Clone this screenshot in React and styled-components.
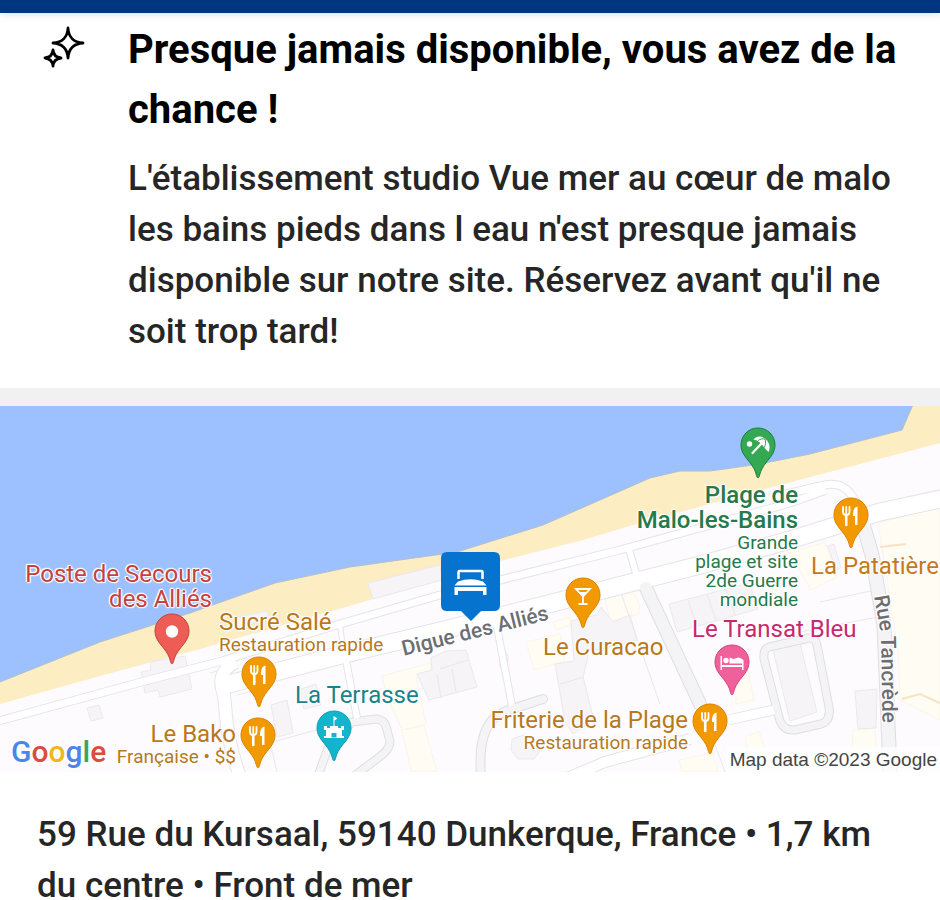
import React from "react";
import styled, { createGlobalStyle, css } from "styled-components";

const GlobalStyle = createGlobalStyle`
  *, *::before, *::after { box-sizing: border-box; }
  body {
    margin: 0;
    background: #fff;
    color: #262626;
    font-family: Roboto, "Liberation Sans", sans-serif;
  }
`;

const Page = styled.main`
  display: flex;
  flex-direction: column;
`;

const TopBar = styled.header`
  height: 13px;
  background: #00357f;
  box-shadow: 0 1px 8px rgba(0, 0, 0, 0.14);
`;

const Notice = styled.section`
  display: grid;
  grid-template-columns: 44px minmax(0, 1fr);
  column-gap: 42px;
  padding: 7px 36px 31px 42px;
`;

const NoticeIcon = styled.svg`
  width: 44px;
  height: 44px;
  margin-top: 6px;
`;

const NoticeTitle = styled.h2`
  margin: 0 0 13px;
  color: #000;
  font-size: 40px;
  font-weight: 700;
  line-height: 60px;
`;

const BodyText = styled.p`
  margin: 0;
  font-size: 35px;
  font-weight: 500;
  line-height: 51px;
`;

const Divider = styled.div`
  height: 18px;
  background: #f1f1f1;
`;

const Map = styled.section`
  position: relative;
  height: 366px;
  overflow: hidden;
  background: #fdfbfe;
`;

const MapDrawing = styled.svg`
  display: block;
  width: 100%;
  height: 100%;
`;

const spot = css`
  position: absolute;
  left: ${({ $x }) => `calc(100% * ${$x} / 940)`};
  top: ${({ $y }) => $y}px;
`;

const PinShape = styled.svg`
  ${spot}
  width: 36px;
  height: 52px;
  margin-left: -18px;
  color: ${({ $color }) => $color};
`;

const StayMarker = styled.svg`
  ${spot}
  width: 60px;
  height: 70px;
  margin-left: -30px;
`;

const halo = "0 0 2px #fff, 1px 0 1px #fff, -1px 0 1px #fff, 0 1px 1px #fff, 0 -1px 1px #fff, 1px 1px 1px #fff, -1px -1px 1px #fff";

const PlaceLabel = styled.div`
  position: absolute;
  top: ${({ $y }) => $y}px;
  ${({ $x, $end }) =>
    $end
      ? `right: calc(100% * ${940 - $x} / 940); text-align: right;`
      : `left: calc(100% * ${$x} / 940);`}
  color: ${({ $color }) => $color};
  white-space: nowrap;
  text-shadow: ${halo};
`;

const PlaceName = styled.div`
  font-size: 24px;
  font-weight: ${({ $strong }) => ($strong ? 500 : 400)};
  line-height: 25px;
`;

const PlaceKind = styled.div`
  font-size: 19px;
  line-height: 19px;
`;

const StreetName = styled.span`
  ${spot}
  color: #6d6e73;
  font-size: 21px;
  font-weight: 500;
  line-height: 24px;
  white-space: nowrap;
  text-shadow: ${halo};
  transform: rotate(${({ $angle }) => $angle}deg);
  transform-origin: 0 50%;
`;

const Logo = styled.div`
  position: absolute;
  left: 11px;
  bottom: 0;
  font-size: 30px;
  font-weight: 500;
  line-height: 40px;
  text-shadow: ${halo};
`;

const LogoLetter = styled.span`
  color: ${({ $color }) => $color};
`;

const Credit = styled.small`
  position: absolute;
  right: 0;
  bottom: 0;
  padding: 0 3px;
  background: rgba(255, 255, 255, 0.7);
  color: #444;
  font-family: "Liberation Sans", Arial, sans-serif;
  font-size: 19px;
  line-height: 25px;
`;

const Address = styled.address`
  padding: 37px 37px 0;
  font-style: normal;
`;

const glyphs = {
  food: (
    <g fill="none" stroke="#fff" strokeWidth="1.8" strokeLinecap="round">
      <path d="M10 10v5c0 4 6.500 4 6.500 0v-5M13.250 10v6" />
      <path d="M13.250 18v10" strokeWidth="2.600" />
      <path d="M24.500 9.500c-4 1-4.500 5-4.500 9.500h2v9h2.500z" fill="#fff" stroke="none" />
    </g>
  ),
  dot: <circle cx="18" cy="18.500" r="6.200" fill="#fff" />,
  drink: (
    <g fill="none" stroke="#fff" strokeWidth="1.800">
      <path d="M11 12h14l-7 7.500z" />
      <path d="M14 15h8l-4 4z" fill="#fff" stroke="none" />
      <path d="M18 18v9M13.500 27h9" />
    </g>
  ),
  bed: (
    <g fill="#fff">
      <path d="M6.500 12H8v9h20v-5h1.500v10H28v-3H8v3H6.500z" />
      <circle cx="12" cy="16.500" r="2.700" />
      <path d="M15.500 19.500v-6l4 1.500 5-1.500 4 1.500v4.500z" />
    </g>
  ),
  castle: (
    <g fill="#fff">
      <path d="M8 16h3v2h3v-2h8v2h3v-2h3v4h-2v6h2v2H8v-2h2v-6H8z" />
      <path d="M17.500 16V6l4 2.500-3 2V16z" />
      <path d="M15.500 27.500V23h5v4.500z" fill="#12b5cb" />
    </g>
  ),
  beach: (
    <g fill="#fff">
      <circle cx="9.500" cy="17" r="2.700" />
      <path d="M13.500 12.500C16 9 21 8.500 25 11.500 29 14.500 31 20 28.500 25L26 22.500 21 16.500 17 13.500z" />
      <path d="M21.500 16.500L12.500 26" stroke="#fff" strokeWidth="2.200" strokeLinecap="round" />
      <path d="M18 13.500C20 12 23 11.500 25 12M24.500 20.500C25.500 18 26 14.500 25 12" fill="none" stroke="#34a853" strokeWidth="1" />
    </g>
  ),
};

function Pin({ x, y, color, edge, glyph }) {
  return (
    <PinShape $x={x} $y={y} $color={color} viewBox="0 0 36 52" aria-hidden="true">
      <path
        d="M18 1C8.500 1 1 8.500 1 18c0 7 4 11.500 8.500 17 3.500 4.500 6 8.500 7 13.500.5 3 2.500 3 3 0 1-5 3.500-9 7-13.500C31 29.500 35 25 35 18 35 8.500 27.500 1 18 1z"
        fill="currentColor"
        stroke={edge}
        strokeWidth="1"
      />
      {glyphs[glyph]}
    </PinShape>
  );
}

const ORANGE = "#f29900";
const ORANGE_EDGE = "#d98200";
const BROWN = "#b87820";
const GREEN = "#26794a";

const pins = [
  { x: 758, y: 21, color: "#34a853", edge: "#188038", glyph: "beach" },
  { x: 851, y: 91, color: ORANGE, edge: ORANGE_EDGE, glyph: "food" },
  { x: 583, y: 171, color: ORANGE, edge: ORANGE_EDGE, glyph: "drink" },
  { x: 172, y: 207, color: "#ee5c56", edge: "#c5403b", glyph: "dot" },
  { x: 732, y: 238, color: "#f0609a", edge: "#d84080", glyph: "bed" },
  { x: 259, y: 250, color: ORANGE, edge: ORANGE_EDGE, glyph: "food" },
  { x: 710, y: 297, color: ORANGE, edge: ORANGE_EDGE, glyph: "food" },
  { x: 334, y: 304, color: "#12b5cb", edge: "#129eaf", glyph: "castle" },
  { x: 258, y: 311, color: ORANGE, edge: ORANGE_EDGE, glyph: "food" },
];

const places = [
  { x: 212, y: 156, end: true, color: "#c5413e", names: ["Poste de Secours", "des Alliés"] },
  { x: 219, y: 204, color: BROWN, names: ["Sucré Salé"], kinds: ["Restauration rapide"] },
  { x: 236, y: 316, end: true, color: BROWN, names: ["Le Bako"], kinds: ["Française • $$"] },
  { x: 295, y: 277, color: "#1b828c", names: ["La Terrasse"] },
  { x: 543, y: 229, color: BROWN, names: ["Le Curacao"] },
  { x: 688, y: 302, end: true, color: BROWN, names: ["Friterie de la Plage"], kinds: ["Restauration rapide"] },
  {
    x: 798, y: 77, end: true, strong: true, color: GREEN,
    names: ["Plage de", "Malo-les-Bains"],
    kinds: ["Grande", "plage et site", "2de Guerre", "mondiale"],
  },
  { x: 811, y: 148, color: "#c4791c", names: ["La Patatière"] },
  { x: 692, y: 211, color: "#c8286f", names: ["Le Transat Bleu"] },
];

const buildings = [
  "368,583 440,565 442,580 373,599",
  "141,672 151,670 150,662 185,656 192,689 160,697 158,690 145,693",
  "87,708 99,705 103,718 91,721",
  "234,618 267,611 269,618 238,627",
  "271,705 287,700 293,733 277,737",
  "298,690 316,684 321,705 304,709",
  "417,674 432,670 431,658 446,651 466,650 477,687 429,700",
  "555,664 574,661 571,621 597,615 601,607 613,622 630,615 637,640 589,652 583,677 594,720 573,734 565,722",
  "669,604 749,583 758,609 677,632",
  "773,650 800,643 817,712 790,721",
  "855,691 877,689 876,728 858,729",
  "512,739 524,735 540,751 534,759 518,759 511,750",
  "828,546 834,544 841,568 836,570",
];

const yellowBuildings = [
  "382,676 430,663 432,671 416,676 426,724 402,730 386,694",
  "402,730 424,726 437,771 411,771",
  "526,642 560,634 565,661 534,670",
  "553,622 570,617 571,625 556,630",
  "604,594 630,588 640,605 638,614 610,622",
  "790,553 825,542 837,577 811,590",
  "735,676 748,670 754,700 736,704",
  "745,737 759,731 764,747 747,752",
  "878,523 940,507 940,720 900,700 898,650",
  "853,730 875,728 876,748 852,749",
  "679,760 712,753 718,771 682,771",
];

const roads = [
  { d: "M-5 722L145 681L222 661L340 624L440 595L620 550L790 503L826 490", w: 7 },
  { d: "M225 685L345 654L440 631L560 601L700 565L790 540L880 512L945 498", w: 17 },
  { d: "M236 662C222 668 218 680 224 695C226 712 226 740 240 776", w: 12 },
  { d: "M345 655L357 718", w: 6 },
  { d: "M340 625L344 655", w: 4 },
  { d: "M628 546L638 580", w: 6 },
  { d: "M496 622L512 706", w: 6 },
  { d: "M567 778L605 762L690 739", w: 10 },
  { d: "M728 720L778 709", w: 9 },
  { d: "M602 760L680 738", w: 4 },
  { d: "M770 498L820 486C842 480 850 490 860 508", w: 7 },
];

const greyRoads = [
  { d: "M318 776L329 745L352 722L376 719C388 720 386 730 390 741C390 752 380 756 354 776", w: 7 },
  { d: "M481 776C478 740 486 718 506 711L543 699", w: 8 },
  { d: "M646 588L700 704", w: 12 },
  { d: "M861 517L872 555L884 625L890 772", w: 13 },
  { d: "M769 647L809 638Q815 637 817 645L829 707Q831 721 821 724L795 730Q784 731 780 721L764 659Q763 649 769 647Z", w: 7 },
];

const thinLines = [
  "M700 704L725 772",
  "M210 673L228 668M237 695L260 689",
  "M276 741L320 729M270 742L277 772",
  "M440 669L468 660M452 669L456 692M437 674L441 698",
  "M560 684L584 677",
  "M688 600L697 626M707 594L716 620M726 589L735 615",
  "M620 590L660 704",
  "M500 655L504 650L508 656L507 671L503 673L500 666Z",
  "M820 602L875 590M783 635L878 617",
];

function MapArt() {
  return (
    <MapDrawing viewBox="0 406 940 366" preserveAspectRatio="none" aria-hidden="true">
      <path
        d="M0 400H940V443L780 485L640 523L583 540L500 561L440 572L370 600L200 649L100 676L0 704Z"
        fill="#fdedc2"
      />
      <path
        d="M-5 400H915L902 430L810 454L760 464L710 471H680L650 478L600 500L543 525L457 552L350 567L275 583L190 613L100 642L-5 684Z"
        fill="#9cc1fe"
        stroke="#b5bfc7"
        strokeWidth="1"
      />
      {yellowBuildings.map((points) => (
        <polygon key={points} points={points} fill="#fffcf4" stroke="#fcf5e6" />
      ))}
      {buildings.map((points) => (
        <polygon key={points} points={points} fill="#f6f4f7" stroke="#ebe9ee" />
      ))}
      <g fill="none" strokeLinejoin="round">
        {thinLines.map((d) => <path key={d} d={d} stroke="#e9e7ec" />)}
        {roads.map(({ d, w }) => <path key={d} d={d} stroke="#e5e4e9" strokeWidth={w + 2} />)}
        {greyRoads.map(({ d, w }) => <path key={d} d={d} stroke="#dedee3" strokeWidth={w + 2} strokeLinecap="round" />)}
        {roads.map(({ d, w }) => <path key={d} d={d} stroke="#fff" strokeWidth={w} />)}
        {greyRoads.map(({ d, w }) => <path key={d} d={d} stroke="#f4f4f7" strokeWidth={w} strokeLinecap="round" />)}
      </g>
      <path d="M880 547L906 544M902 699L920 694L940 703" fill="none" stroke="#f7e2c5" strokeWidth="2" />
    </MapDrawing>
  );
}

const logoLetters = [
  ["G", "#4a86e8"], ["o", "#dd4b3e"], ["o", "#efb71c"],
  ["g", "#4a86e8"], ["l", "#3aa757"], ["e", "#dd4b3e"],
];

export default function App() {
  return (
    <>
      <GlobalStyle />
      <Page>
        <TopBar />
        <Notice>
          <NoticeIcon viewBox="0 0 44 44" fill="none" stroke="#000" strokeWidth="2.800" strokeLinejoin="round" aria-hidden="true">
            <path d="M26 2C26.500 11 32 16.500 41 17C32 17.500 26.500 23 26 32C25.500 23 20 17.500 11 17C20 16.500 25.500 11 26 2Z" />
            <path d="M11 24C11.500 29 14 31.500 19 32C14 32.500 11.500 35 11 40C10.500 35 8 32.500 3 32C8 31.500 10.500 29 11 24Z" />
          </NoticeIcon>
          <div>
            <NoticeTitle>Presque jamais disponible, vous avez de la chance !</NoticeTitle>
            <BodyText>
              L'établissement studio Vue mer au cœur de malo les bains pieds dans l eau n'est
              presque jamais disponible sur notre site. Réservez avant qu'il ne soit trop tard!
            </BodyText>
          </div>
        </Notice>
        <Divider />
        <Map aria-label="Map">
          <MapArt />
          <StayMarker $x={471} $y={146} viewBox="0 0 60 70" aria-hidden="true">
            <path d="M6 0H53Q59 0 59 6V53Q59 59 53 59H40L30 69L20 59H6Q0 59 0 53V6Q0 0 6 0Z" fill="#0673ce" />
            <path d="M17.500 27V20Q17.500 19 18.500 19H40.500Q41.500 19 41.500 20V27" fill="none" stroke="#fff" strokeWidth="2.500" />
            <path d="M17 29.500Q29.500 25 42 29.500L45.500 33.500H13.500Z" fill="#fff" />
            <path d="M13.500 35H45.500V43H42V39H17V43H13.500Z" fill="#fff" />
          </StayMarker>
          <StreetName $x={402} $y={231} $angle={-14}>Digue des Alliés</StreetName>
          <StreetName $x={881} $y={177} $angle={80}>Rue</StreetName>
          <StreetName $x={888} $y={218} $angle={89}>Tancrède</StreetName>
          {pins.map((pin) => <Pin key={`${pin.x}-${pin.y}`} {...pin} />)}
          {places.map(({ x, y, end, strong, color, names, kinds = [] }) => (
            <PlaceLabel key={names[0]} $x={x} $y={y} $end={end} $color={color}>
              {names.map((name) => <PlaceName key={name} $strong={strong}>{name}</PlaceName>)}
              {kinds.map((kind) => <PlaceKind key={kind}>{kind}</PlaceKind>)}
            </PlaceLabel>
          ))}
          <Logo>
            {logoLetters.map(([letter, color], i) => (
              <LogoLetter key={i} $color={color}>{letter}</LogoLetter>
            ))}
          </Logo>
          <Credit>Map data ©2023 Google</Credit>
        </Map>
        <Address>
          <BodyText as="span">
            59 Rue du Kursaal, 59140 Dunkerque, France • 1,7 km du centre • Front de mer
          </BodyText>
        </Address>
      </Page>
    </>
  );
}
